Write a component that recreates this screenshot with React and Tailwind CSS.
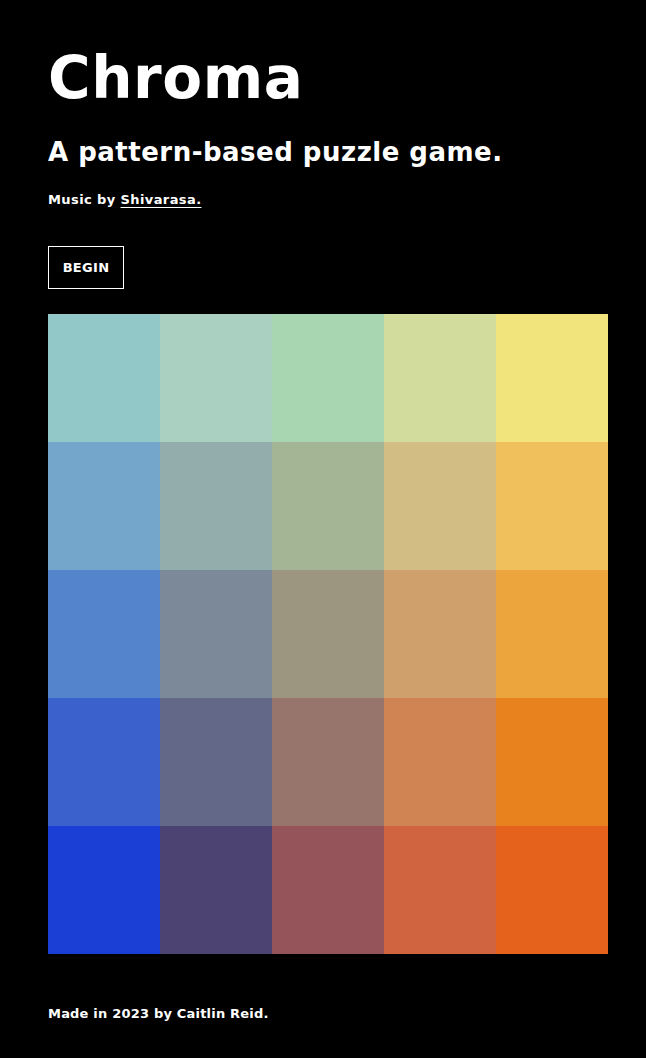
const rows = [
  ["#93c8c8", "#a9d0c0", "#a8d6b0", "#d2dc9c", "#f2e47c"],
  ["#74a6cc", "#93acac", "#a3b595", "#d2be84", "#f0c05c"],
  ["#5484cc", "#7b8998", "#9c9580", "#d0a06c", "#eca43c"],
  ["#3b62cc", "#646888", "#97756c", "#d08454", "#e8821f"],
  ["#1b3fd4", "#4d4373", "#945459", "#d06440", "#e4621c"],
];

export default function App() {
  return (
    <div className="min-h-screen bg-black text-white px-12 font-['DejaVu_Sans',sans-serif]">
      <h1 className="pt-[43px] text-[58px] leading-[70px] font-bold tracking-[0.6px]">Chroma</h1>
      <h2 className="mt-[22px] text-[26px] leading-[34px] font-bold tracking-[0.5px]">A pattern-based puzzle game.</h2>
      <p className="mt-[21px] text-[13px] leading-[20px] font-bold tracking-[0.4px]">
        Music by <a href="#" className="underline underline-offset-[3px]">Shivarasa.</a>
      </p>
      <button className="mt-[36px] h-[43px] w-[76px] border border-white text-[13px] font-bold tracking-[0.3px]">BEGIN</button>
      <div className="mt-[25px] grid grid-cols-5 w-[560px]">
        {rows.flat().map((c, i) => (
          <div key={i} className="h-32" style={{ backgroundColor: c }} />
        ))}
      </div>
      <p className="mt-[50px] text-[13px] leading-[20px] font-bold tracking-[0.2px]">Made in 2023 by Caitlin Reid.</p>
    </div>
  );
}
